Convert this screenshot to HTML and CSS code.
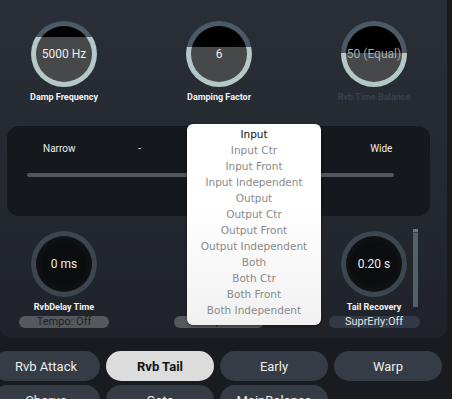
FILE: index.html
```html
<!DOCTYPE html>
<html lang="en">
<head>
    <meta charset="UTF-8">
    <title>Rvb Tail</title>
    <link rel="stylesheet" href="styles.css">
</head>
<body>
    <div class="panel">
        <div class="knob-row top-row">
            <div class="cell">
                <div class="knob knob-freq"><div class="face">5000 Hz</div></div>
                <div class="label">Damp Frequency</div>
            </div>
            <div class="cell">
                <div class="knob knob-damp"><div class="face">6</div></div>
                <div class="label">Damping Factor</div>
            </div>
            <div class="cell">
                <div class="knob knob-bal"><div class="face dim">50 (Equal)</div></div>
                <div class="label off">Rvb Time Balance</div>
            </div>
        </div>

        <div class="stereo">
            <div class="marks">
                <span>Narrow</span>
                <span>-</span>
                <span>Normal</span>
                <span>-</span>
                <span>Wide</span>
            </div>
            <div class="track"></div>
        </div>

        <div class="knob-row bottom-row">
            <div class="cell">
                <div class="knob knob-dark"><div class="face">0 ms</div></div>
                <div class="label">RvbDelay Time</div>
                <div class="pill">Tempo: Off</div>
            </div>
            <div class="cell">
                <div class="knob knob-dark hidden"><div class="face"></div></div>
                <div class="label hidden">Width Mode</div>
                <div class="pill">Input</div>
            </div>
            <div class="cell cell-right">
                <div class="knob knob-dark"><div class="face">0.20 s</div></div>
                <div class="label">Tail Recovery</div>
                <div class="pill pill-blue">SuprErly:Off</div>
            </div>
            <div class="vslider"><div class="cap"></div></div>
        </div>

        <!-- popup menu for width mode -->
        <div class="menu">
            <div class="item current">Input</div>
            <div class="item">Input Ctr</div>
            <div class="item">Input Front</div>
            <div class="item">Input Independent</div>
            <div class="item">Output</div>
            <div class="item">Output Ctr</div>
            <div class="item">Output Front</div>
            <div class="item">Output Independent</div>
            <div class="item">Both</div>
            <div class="item">Both Ctr</div>
            <div class="item">Both Front</div>
            <div class="item">Both Independent</div>
        </div>
    </div>

    <div class="tabs">
        <button>Rvb Attack</button>
        <button class="active">Rvb Tail</button>
        <button>Early</button>
        <button>Warp</button>
        <button>Chorus</button>
        <button>Gate</button>
        <button>MainBalance</button>
    </div>
</body>
</html>
```

FILE: styles.css
```css
body {
    margin: 0;
    width: 452px;
    height: 399px;
    overflow: hidden;
    background: #181b1f;
    font-family: Roboto, "Liberation Sans", sans-serif;
    color: #e6e6e6;
}
.panel {
    position: relative;
    width: 447px;
    height: 338px;
    border-radius: 0 0 12px 12px;
    background: linear-gradient(to bottom, #2a2f37, #1f2329);
}
.knob-row {
    display: grid;
    grid-template-columns: 120px 120px 120px;
    column-gap: 35px;
    padding-left: 4px;
}
.top-row {
    padding-top: 21px;
}
.bottom-row {
    padding-top: 15px;
}
.cell {
    display: flex;
    flex-direction: column;
    align-items: center;
}
.cell-right {
    grid-row: 1;
    grid-column: 3;
}
.knob {
    width: 66px;
    height: 66px;
    box-sizing: border-box;
    padding: 5px;
    border-radius: 50%;
}
.face {
    width: 100%;
    height: 100%;
    border-radius: 50%;
    display: flex;
    align-items: center;
    justify-content: center;
    font-size: 12px;
    color: #ececec;
}
.face.dim {
    color: #a8aaaa;
}
.knob-freq {
    background: linear-gradient(to bottom, #4c5966 24%, #b3c8c7 24%);
}
.knob-freq .face {
    background: linear-gradient(to bottom, transparent 20%, #46484a 20%), radial-gradient(circle at 50% 0%, #000 35%, #202225 75%);
}
.knob-damp {
    background: linear-gradient(to bottom, #4c5966 39%, #b3c8c7 39%);
}
.knob-damp .face {
    background: linear-gradient(to bottom, transparent 37%, #46484a 37%), radial-gradient(circle at 50% 0%, #000 40%, #202225 80%);
}
.knob-bal {
    background: linear-gradient(to bottom, #4c5966 48%, #b3c8c7 48%);
}
.knob-bal .face {
    background: linear-gradient(to bottom, transparent 48%, #46484a 48%), radial-gradient(circle at 50% 0%, #000 45%, #202225 85%);
}
.knob-dark {
    background: #3c4550;
}
.knob-dark .face {
    background: radial-gradient(circle at 50% 50%, #0c0d0f 55%, #1a1d21 100%);
}
.label {
    margin-top: 4px;
    font-size: 9px;
    line-height: 12px;
    font-weight: bold;
    color: #f2f2f2;
}
.label.off {
    color: #3a4049;
}
.hidden {
    visibility: hidden;
}
.pill {
    margin-top: 3px;
    width: 90px;
    height: 12px;
    border-radius: 6px;
    background: #55585d;
    color: #1d1f23;
    font-size: 11px;
    line-height: 12px;
    text-align: center;
}
.pill-blue {
    width: 91px;
    background: #313a45;
    color: #e4e4e4;
}
.vslider {
    grid-row: 1;
    grid-column: 3;
    justify-self: end;
    align-self: start;
    margin-top: -2px;
    margin-right: 16px;
    width: 5px;
    height: 78px;
    background: #56606a;
}
.cap {
    height: 3px;
    border-bottom: 1px solid #3a424b;
    background: #6b747d;
}
.stereo {
    margin: 23px 0 0 7px;
    width: 423px;
    height: 90px;
    box-sizing: border-box;
    padding: 17px 0 0 12px;
    border-radius: 12px;
    background: #15181c;
}
.marks {
    display: grid;
    grid-template-columns: repeat(5, 80.5px);
    font-size: 10px;
    line-height: 12px;
    text-align: center;
    color: #ededed;
}
.track {
    margin: 18px 0 0 8px;
    width: 367px;
    height: 4px;
    border-radius: 2px;
    background: #4f5760;
}
.menu {
    position: absolute;
    left: 187px;
    top: 124px;
    width: 134px;
    box-sizing: border-box;
    padding: 2px 0 7px;
    border-radius: 6px;
    background: linear-gradient(to bottom, #ffffff 40%, #f1f1f1);
    box-shadow: 0 1px 3px rgba(0, 0, 0, 0.5);
    font-family: "DejaVu Sans", sans-serif;
    font-size: 10.5px;
    line-height: 16px;
    text-align: center;
    color: #8a8a8a;
}
.menu .current {
    color: #111;
}
.tabs {
    display: grid;
    grid-template-columns: repeat(4, 108px);
    gap: 4px 6px;
    margin: 13px 0 0 -8px;
}
.tabs button {
    height: 30px;
    border: none;
    border-radius: 15px;
    background: #353c45;
    color: #ececec;
    font-family: Roboto, sans-serif;
    font-size: 13px;
    padding: 0;
}
.tabs button.active {
    background: #dcdcdc;
    color: #111;
    font-weight: bold;
}
```
